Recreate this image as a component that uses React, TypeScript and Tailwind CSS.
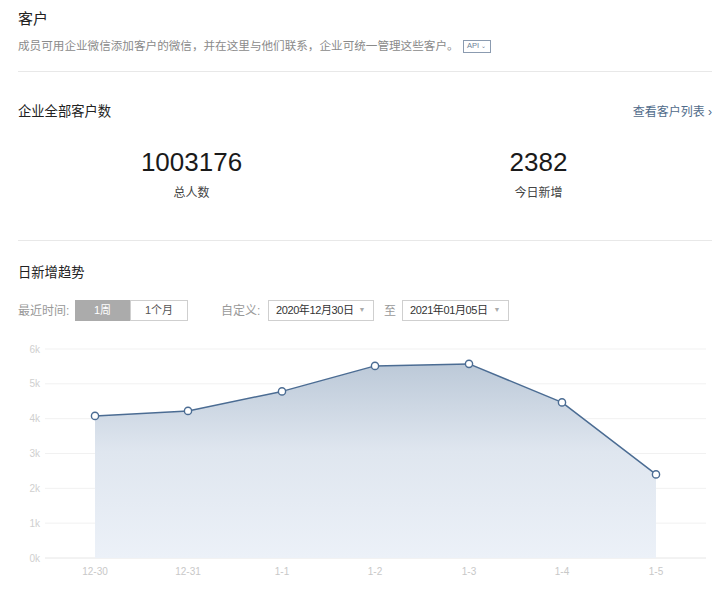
import React from 'react';

const font = { fontFamily: '"Liberation Sans", "Noto Sans CJK SC", sans-serif' };

// chart geometry, svg coords (page y - 330)
const TOP = 19;
const BOTTOM = 228;
const LEFT = 45;
const RIGHT = 706;
const STEP = (BOTTOM - TOP) / 6;

const points = [
  { label: '12-30', x: 95, value: 4080 },
  { label: '12-31', x: 188, value: 4223 },
  { label: '1-1', x: 282, value: 4783 },
  { label: '1-2', x: 375, value: 5515 },
  { label: '1-3', x: 469, value: 5573 },
  { label: '1-4', x: 562, value: 4467 },
  { label: '1-5', x: 656, value: 2400 },
];

const yOf = (v: number) => BOTTOM - (v / 1000) * STEP;

function TrendChart() {
  const line = points.map((p) => `${p.x},${yOf(p.value).toFixed(1)}`).join(' ');
  const area = `${points[0].x},${BOTTOM} ${line} ${points[points.length - 1].x},${BOTTOM}`;

  return (
    <svg width="720" height="273" viewBox="0 0 720 273" className="block">
      <defs>
        <linearGradient id="areaFill" x1="0" y1="0" x2="0" y2="1">
          <stop offset="0%" stopColor="#bcc9d8" />
          <stop offset="45%" stopColor="#dfe6ef" />
          <stop offset="100%" stopColor="#ecf1f8" />
        </linearGradient>
      </defs>

      {/* grid */}
      {[6, 5, 4, 3, 2, 1, 0].map((k) => {
        const y = BOTTOM - k * STEP;
        return (
          <g key={k}>
            <line x1={LEFT} x2={RIGHT} y1={y} y2={y} stroke={k === 0 ? '#e6e6e6' : '#f1f1f1'} strokeWidth="1" />
            <text x="40" y={y + 3.5} textAnchor="end" fontSize="10" fill="#cfcfcf" style={font}>
              {k}k
            </text>
          </g>
        );
      })}

      <polygon points={area} fill="url(#areaFill)" />
      <polyline points={line} fill="none" stroke="#4b6c93" strokeWidth="1.5" strokeLinejoin="round" />

      {points.map((p) => (
        <g key={p.label}>
          <circle cx={p.x} cy={yOf(p.value)} r="3.6" fill="#fff" stroke="#4b6c93" strokeWidth="1.4" />
          <text x={p.x} y="245" textAnchor="middle" fontSize="10" fill="#c8c8c8" style={font}>
            {p.label}
          </text>
        </g>
      ))}
    </svg>
  );
}

function DateSelect({ value }: { value: string }) {
  return (
    <div className="flex h-[21px] items-center justify-between whitespace-nowrap border border-[#cfcfcf] bg-white pl-[7px] pr-[8px] text-[11px] tracking-[-0.4px] text-[#333]">
      <span>{value}</span>
      <span className="text-[7px] text-[#aaa]">▼</span>
    </div>
  );
}

export default function App() {
  return (
    <div className="w-[720px] h-[603px] overflow-hidden bg-white" style={font}>
      <div className="pl-[18px] pr-[8px]">
        {/* header */}
        <div className="pt-[9px] text-[15px] leading-[20px] text-[#222]">客户</div>
        <div className="mt-[8px] flex items-center text-[11.6px] leading-[18px] text-[#8a8a8a]">
          <span>成员可用企业微信添加客户的微信，并在这里与他们联系，企业可统一管理这些客户。</span>
          <span className="ml-[4px] flex h-[13px] w-[28px] items-center justify-center gap-[2px] border border-[#8b9bb0] text-[7.5px] leading-none text-[#6b7f98]">
            API<span className="text-[6px]">⌄</span>
          </span>
        </div>
        <div className="mt-[16px] h-px bg-[#e8e8e8]" />

        {/* totals */}
        <div className="mt-[30px] flex items-center justify-between leading-[20px]">
          <span className="text-[13.3px] text-[#222]">企业全部客户数</span>
          <span className="text-[12px] text-[#4f6b8a]">查看客户列表 ›</span>
        </div>
        <div className="mt-[25px] grid grid-cols-2 text-center">
          <div>
            <div className="text-[26px] leading-[30px] text-[#1a1a1a]">1003176</div>
            <div className="mt-[7px] text-[12px] leading-[18px] text-[#444]">总人数</div>
          </div>
          <div>
            <div className="text-[26px] leading-[30px] text-[#1a1a1a]">2382</div>
            <div className="mt-[7px] text-[12px] leading-[18px] text-[#444]">今日新增</div>
          </div>
        </div>
        <div className="mt-[38px] h-px bg-[#e8e8e8]" />

        {/* trend */}
        <div className="mt-[22px] text-[13.3px] leading-[20px] text-[#222]">日新增趋势</div>
        <div className="mt-[17px] flex h-[21px] items-center whitespace-nowrap text-[12px] text-[#999]">
          <span className="w-[57px]">最近时间:</span>
          <div className="flex h-[21px]">
            <span className="flex w-[55px] items-center justify-center bg-[#ababab] text-[11px] text-white">1周</span>
            <span className="flex w-[58px] items-center justify-center border border-[#cfcfcf] bg-white text-[11px] text-[#555]">
              1个月
            </span>
          </div>
          <span className="ml-[33px] w-[47px]">自定义:</span>
          <div className="w-[106px]">
            <DateSelect value="2020年12月30日" />
          </div>
          <span className="ml-[10px] mr-[6px] w-[12px] text-center">至</span>
          <div className="w-[107px]">
            <DateSelect value="2021年01月05日" />
          </div>
        </div>
      </div>

      <div className="mt-[9px]">
        <TrendChart />
      </div>
    </div>
  );
}
